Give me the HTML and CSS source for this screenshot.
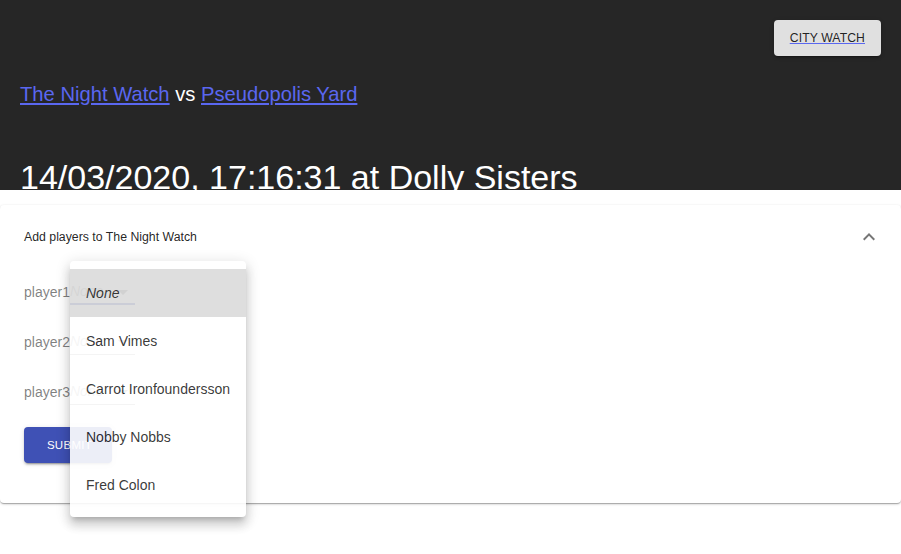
FILE: index.html
```html
<!DOCTYPE html>
<html>
<head>
<meta charset="utf-8">
<link rel="stylesheet" href="styles.css">
</head>
<body>
<header class="header">
  <div class="toolbar">
    <a class="city-btn" href="#">CITY WATCH</a>
  </div>
  <div class="teams"><a href="#">The Night Watch</a> vs <a href="#">Pseudopolis Yard</a></div>
  <div class="date">14/03/2020, 17:16:31 at Dolly Sisters</div>
</header>
<section class="panel">
  <div class="summary">
    <span class="summary-title">Add players to The Night Watch</span>
    <svg class="chevron" viewBox="0 0 24 24" width="24" height="24"><path d="M7.41 15.41L12 10.83l4.59 4.58L18 14l-6-6-6 6z"/></svg>
  </div>
  <div class="details">
    <div class="row">
      <span class="label">player1</span>
      <span class="select focused"><span class="placeholder">None</span><svg class="arrow" viewBox="0 0 24 24" width="24" height="24"><path d="M7 10l5 5 5-5z"/></svg></span>
    </div>
    <div class="row">
      <span class="label">player2</span>
      <span class="select"><span class="placeholder">None</span><svg class="arrow" viewBox="0 0 24 24" width="24" height="24"><path d="M7 10l5 5 5-5z"/></svg></span>
    </div>
    <div class="row">
      <span class="label">player3</span>
      <span class="select"><span class="placeholder">None</span><svg class="arrow" viewBox="0 0 24 24" width="24" height="24"><path d="M7 10l5 5 5-5z"/></svg></span>
    </div>
    <button class="submit">SUBMIT</button>
  </div>
</section>
<ul class="menu">
  <li class="item selected"><em>None</em></li>
  <li class="item">Sam Vimes</li>
  <li class="item">Carrot Ironfoundersson</li>
  <li class="item">Nobby Nobbs</li>
  <li class="item">Fred Colon</li>
</ul>
</body>
</html>
```
FILE: styles.css
```css
* { box-sizing: border-box; }
html, body { margin: 0; padding: 0; background: #fff; }
body {
  font-family: "Liberation Sans", Arial, sans-serif;
  position: relative;
  width: 901px;
  height: 554px;
  overflow: hidden;
}
.header {
  background: #262626;
  height: 190px;
  padding: 20px 20px 0;
  overflow: hidden;
  color: #fff;
}
.toolbar {
  display: flex;
  justify-content: flex-end;
  height: 36px;
}
.city-btn {
  display: inline-flex;
  align-items: center;
  height: 36px;
  padding: 0 16px;
  background: #e0e0e0;
  color: rgba(0,0,0,0.87);
  font-size: 12.2px;
  letter-spacing: 0.1px;
  text-decoration: underline;
  text-decoration-color: #5a67f0;
  border-radius: 4px;
  box-shadow: 0 3px 1px -2px rgba(0,0,0,0.2), 0 2px 2px 0 rgba(0,0,0,0.14), 0 1px 5px 0 rgba(0,0,0,0.12);
}
.teams {
  margin-top: 26px;
  font-size: 20.2px;
  line-height: 24px;
}
.teams a { color: #5a67f0; }
.date {
  margin-top: 51px;
  font-size: 34px;
  line-height: 40px;
  white-space: nowrap;
}
.panel {
  margin-top: 15px;
  background: #fff;
  border-radius: 4px;
  box-shadow: 0 1px 3px 0 rgba(0,0,0,0.2), 0 1px 1px 0 rgba(0,0,0,0.14), 0 2px 1px -1px rgba(0,0,0,0.12);
}
.summary {
  height: 64px;
  padding: 0 20px 0 24px;
  display: flex;
  align-items: center;
  justify-content: space-between;
}
.summary-title {
  font-size: 12.3px;
  color: rgba(0,0,0,0.87);
}
.chevron { fill: rgba(0,0,0,0.54); }
.details {
  padding: 10px 24px 40px;
  display: flex;
  flex-direction: column;
  align-items: flex-start;
  gap: 24px;
}
.row {
  display: flex;
  align-items: center;
  height: 26px;
}
.label {
  font-size: 14px;
  color: rgba(0,0,0,0.5);
}
.select {
  position: relative;
  width: 65px;
  height: 26px;
  padding: 4px 0 5px;
  font-size: 14px;
  line-height: 16px;
  border-bottom: 1px solid rgba(0,0,0,0.42);
}
.select.focused { border-bottom: 2px solid #3f51b5; }
.placeholder {
  font-style: italic;
  color: rgba(0,0,0,0.4);
}
.arrow {
  position: absolute;
  right: 0;
  top: 1px;
  fill: rgba(0,0,0,0.54);
}
.submit {
  margin-top: -2px;
  height: 36px;
  width: 88px;
  padding: 0 0 0 3px;
  border: none;
  border-radius: 4px;
  background: #3f51b5;
  color: #fff;
  font-family: "Liberation Sans", Arial, sans-serif;
  font-size: 11.5px;
  letter-spacing: 0.3px;
  box-shadow: 0 3px 1px -2px rgba(0,0,0,0.2), 0 2px 2px 0 rgba(0,0,0,0.14), 0 1px 5px 0 rgba(0,0,0,0.12);
}
.menu {
  position: absolute;
  left: 70px;
  top: 261px;
  width: 176px;
  margin: 0;
  padding: 8px 0;
  list-style: none;
  background: #fff;
  border-radius: 4px;
  opacity: 0.9;
  box-shadow: 0 5px 5px -3px rgba(0,0,0,0.2), 0 8px 10px 1px rgba(0,0,0,0.14), 0 3px 14px 2px rgba(0,0,0,0.12);
}
.item {
  height: 48px;
  line-height: 48px;
  padding: 0 16px;
  font-size: 14px;
  color: rgba(0,0,0,0.87);
  white-space: nowrap;
}
.item.selected { background: rgba(0,0,0,0.14); }
```
